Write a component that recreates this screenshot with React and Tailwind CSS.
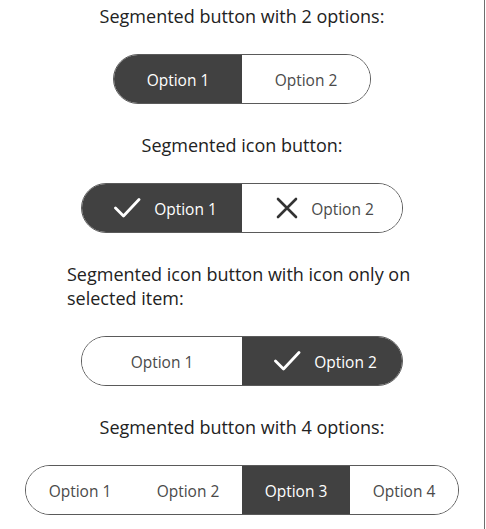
import React, { useState } from "react";

function CheckIcon() {
  return (
    <svg width="28" height="20" viewBox="0 0 28 20" fill="none">
      <polyline
        points="2.5,10 10.5,18 26,1.5"
        stroke="currentColor"
        strokeWidth="2.8"
        strokeLinecap="round"
        strokeLinejoin="round"
      />
    </svg>
  );
}

function CrossIcon() {
  return (
    <svg width="22" height="22" viewBox="0 0 22 22" fill="none">
      <path
        d="M2 2L20 20M20 2L2 20"
        stroke="currentColor"
        strokeWidth="2.6"
        strokeLinecap="round"
      />
    </svg>
  );
}

// one segmented control, options: [{ label, icon }]
function Segmented({ options, width, initial, iconOnlySelected }) {
  const [selected, setSelected] = useState(initial);

  return (
    <div
      className="flex h-[50px] rounded-full border border-[#5a5a5a] overflow-hidden"
      style={{ width }}
    >
      {options.map((opt, i) => {
        const active = i === selected;
        let icon = opt.icon;
        if (iconOnlySelected) icon = active ? "check" : null;
        return (
          <button
            key={opt.label}
            onClick={() => setSelected(i)}
            className={
              "flex-1 flex items-center justify-center gap-[13px] text-[15.5px] " +
              (active ? "bg-[#414141] text-white" : "bg-white text-[#4a4a4a]")
            }
          >
            {icon === "check" && (
              <span className="pl-[6px] flex">
                <CheckIcon />
              </span>
            )}
            {icon === "cross" && (
              <span className="pl-[6px] flex text-[#333]">
                <CrossIcon />
              </span>
            )}
            <span className="pt-[3px]">{opt.label}</span>
          </button>
        );
      })}
    </div>
  );
}

export default function App() {
  return (
    <div
      className="w-[485px] min-h-[529px] bg-white border-r border-[#6e6e6e] flex flex-col items-center pt-[4px] text-[#222]"
      style={{ fontFamily: '"Open Sans", "Liberation Sans", sans-serif' }}
    >
      <h2 className="max-w-[350px] text-[18px] leading-[24px]">
        Segmented button with 2 options:
      </h2>
      <div className="mt-[26px]">
        <Segmented
          width={258}
          initial={0}
          options={[{ label: "Option 1" }, { label: "Option 2" }]}
        />
      </div>

      <h2 className="mt-[29px] max-w-[350px] text-[18px] leading-[24px]">
        Segmented icon button:
      </h2>
      <div className="mt-[26px]">
        <Segmented
          width={322}
          initial={0}
          options={[
            { label: "Option 1", icon: "check" },
            { label: "Option 2", icon: "cross" },
          ]}
        />
      </div>

      <h2 className="mt-[29px] max-w-[350px] text-[18px] leading-[24px]">
        Segmented icon button with icon only on selected item:
      </h2>
      <div className="mt-[26px]">
        <Segmented
          width={322}
          initial={1}
          iconOnlySelected
          options={[{ label: "Option 1" }, { label: "Option 2" }]}
        />
      </div>

      <h2 className="mt-[29px] max-w-[350px] text-[18px] leading-[24px]">
        Segmented button with 4 options:
      </h2>
      <div className="mt-[26px]">
        <Segmented
          width={434}
          initial={2}
          options={[
            { label: "Option 1" },
            { label: "Option 2" },
            { label: "Option 3" },
            { label: "Option 4" },
          ]}
        />
      </div>
    </div>
  );
}
